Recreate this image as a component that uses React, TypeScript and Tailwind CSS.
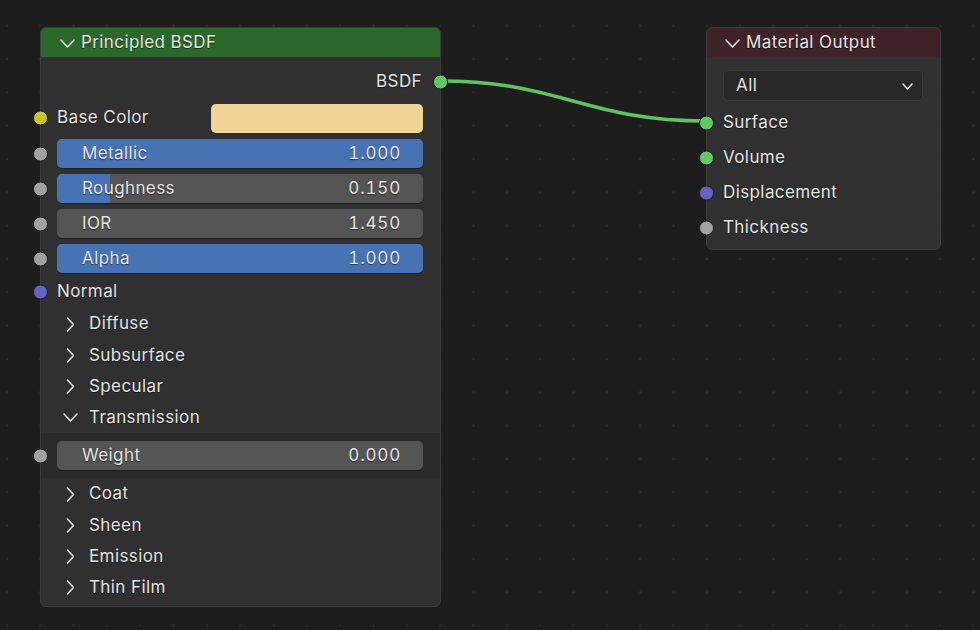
const font = "font-['Inter','Noto_Sans',sans-serif] text-[17px] tracking-[0.4px] text-[#e4e4e4] [text-shadow:0_1px_1px_rgba(0,0,0,0.55)]";

function Down({ w = 15, h = 8 }: { w?: number; h?: number }) {
  return (
    <svg width={w} height={h} viewBox={`0 0 ${w} ${h}`} className="shrink-0">
      <polyline points={`1,1 ${w / 2},${h - 1} ${w - 1},1`} fill="none" stroke="#dedede" strokeWidth="1.6" strokeLinecap="round" strokeLinejoin="round" />
    </svg>
  );
}

function Right() {
  return (
    <svg width="9" height="15" viewBox="0 0 9 15" className="shrink-0">
      <polyline points="1.5,1 7.5,7.5 1.5,14" fill="none" stroke="#dedede" strokeWidth="1.6" strokeLinecap="round" strokeLinejoin="round" />
    </svg>
  );
}

function Socket({ color, side = 'left' }: { color: string; side?: 'left' | 'right' }) {
  return (
    <div
      className={`absolute top-1/2 -translate-y-1/2 w-[15px] h-[15px] rounded-full border border-[#222222] ${side === 'left' ? 'left-[-8px]' : 'right-[-8px]'}`}
      style={{ backgroundColor: color }}
    />
  );
}

function Slider({ label, value, fill, h = 'h-[35px]' }: { label: string; value: string; fill: number; h?: string }) {
  return (
    <div className={`relative flex items-center pl-[16px] pr-[17px] ${h}`}>
      <Socket color="#a1a1a1" />
      <div className="relative flex-1 h-[29px] rounded-[5px] bg-[#545454] overflow-hidden shadow-[0_1px_0_rgba(0,0,0,0.35)]">
        <div className="absolute inset-y-0 left-0 bg-[#4772b3]" style={{ width: `${fill * 100}%` }} />
        <div className="relative flex items-center justify-between h-full pl-[25px] pr-[22px]">
          <span>{label}</span>
          <span className="tabular-nums tracking-[0.8px]">{value}</span>
        </div>
      </div>
    </div>
  );
}

function Panel({ label, open = false, h = 'h-[31px]' }: { label: string; open?: boolean; h?: string }) {
  return (
    <div className={`flex items-center ${open ? 'pl-[22px]' : 'pl-[25px]'} ${h}`}>
      {open ? <Down w={15} h={9} /> : <Right />}
      <span className={open ? 'ml-[11px]' : 'ml-[14px]'}>{label}</span>
    </div>
  );
}

function Input({ label, color, h = 'h-[35px]' }: { label: string; color: string; h?: string }) {
  return (
    <div className={`relative flex items-center pl-[16px] ${h}`}>
      <Socket color={color} />
      <span>{label}</span>
    </div>
  );
}

function PrincipledNode() {
  return (
    <div className={`absolute left-[40px] top-[27px] w-[401px] rounded-[6px] border border-[#3d3d3d] bg-[#303030] ${font}`}>
      <div className="flex items-center h-[29px] pl-[19px] pt-[1px] rounded-t-[5px] bg-[#2c682c]">
        <Down w={15} h={9} />
        <span className="ml-[6px]">Principled BSDF</span>
      </div>
      <div className="pt-[7px] pb-[3px]">
        <div className="relative flex items-center justify-end pr-[18px] h-[36px]">
          <span>BSDF</span>
          <Socket color="#63c763" side="right" />
        </div>
        <div className="relative flex items-center pl-[16px] pr-[17px] h-[36px]">
          <Socket color="#c7c729" />
          <span className="w-[154px]">Base Color</span>
          <div className="flex-1 h-[29px] rounded-[5px] bg-[#f0d596]" />
        </div>
        <Slider label="Metallic" value="1.000" fill={1} />
        <Slider label="Roughness" value="0.150" fill={0.146} />
        <Slider label="IOR" value="1.450" fill={0} />
        <Slider label="Alpha" value="1.000" fill={1} />
        <Input label="Normal" color="#6363c7" h="h-[32px]" />
        <Panel label="Diffuse" h="h-[32px]" />
        <Panel label="Subsurface" />
        <Panel label="Specular" />
        <Panel label="Transmission" open />
        <div className="bg-[#2a2a2a]">
          <Slider label="Weight" value="0.000" fill={0} h="h-[45px]" />
        </div>
        <Panel label="Coat" h="h-[32px]" />
        <Panel label="Sheen" />
        <Panel label="Emission" />
        <Panel label="Thin Film" />
      </div>
    </div>
  );
}

function OutputNode() {
  return (
    <div className={`absolute left-[706px] top-[27px] w-[235px] rounded-[6px] border border-[#3d3d3d] bg-[#303030] ${font}`}>
      <div className="flex items-center h-[29px] pl-[18px] pt-[1px] rounded-t-[5px] bg-[#3f2329]">
        <Down w={15} h={9} />
        <span className="ml-[6px]">Material Output</span>
      </div>
      <div className="pt-[13px] pb-[4px]">
        <div className="pl-[16px] pr-[17px]">
          <div className="flex items-center justify-between h-[31px] rounded-[5px] bg-[#282828] border border-[#3a3a3a] pl-[12px] pr-[9px] pt-[1px]">
            <span>All</span>
            <Down w={11} h={7} />
          </div>
        </div>
        <div className="mt-[4px]">
          <Input label="Surface" color="#63c763" />
          <Input label="Volume" color="#63c763" />
          <Input label="Displacement" color="#6363c7" />
          <Input label="Thickness" color="#a1a1a1" />
        </div>
      </div>
    </div>
  );
}

export default function App() {
  return (
    <div className="relative w-[980px] h-[630px] overflow-hidden bg-[#1d1d1d] bg-[radial-gradient(circle,#2c2c2c_1px,transparent_1.6px)] bg-[size:33.333px_33.333px] bg-[position:-9.67px_9px]">
      <svg className="absolute inset-0" width="980" height="630">
        <path d="M440 81 C 560 81, 586 121, 706 121" fill="none" stroke="#5fc45f" strokeWidth="3.5" />
      </svg>
      <PrincipledNode />
      <OutputNode />
    </div>
  );
}
